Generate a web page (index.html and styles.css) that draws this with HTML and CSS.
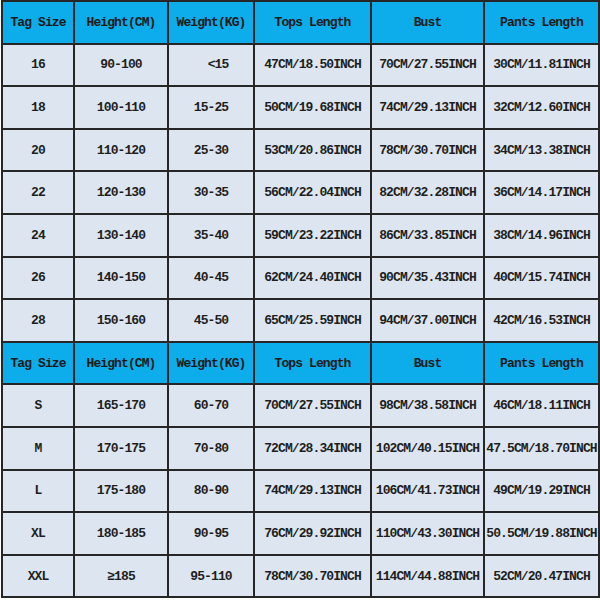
FILE: index.html
```html
<!DOCTYPE html>
<html>
<head>
<meta charset="utf-8">
<link rel="stylesheet" href="styles.css">
</head>
<body>
<table class="chart">
  <colgroup>
    <col class="c1"><col class="c2"><col class="c3"><col class="c4"><col class="c5"><col class="c6">
  </colgroup>
  <tr class="head"><td>Tag Size</td><td>Height(CM)</td><td>Weight(KG)</td><td>Tops Length</td><td>Bust</td><td>Pants Length</td></tr>
  <tr><td>16</td><td>90-100</td><td class="lt">&lt;15</td><td>47CM/18.50INCH</td><td>70CM/27.55INCH</td><td>30CM/11.81INCH</td></tr>
  <tr><td>18</td><td>100-110</td><td>15-25</td><td>50CM/19.68INCH</td><td>74CM/29.13INCH</td><td>32CM/12.60INCH</td></tr>
  <tr><td>20</td><td>110-120</td><td>25-30</td><td>53CM/20.86INCH</td><td>78CM/30.70INCH</td><td>34CM/13.38INCH</td></tr>
  <tr><td>22</td><td>120-130</td><td>30-35</td><td>56CM/22.04INCH</td><td>82CM/32.28INCH</td><td>36CM/14.17INCH</td></tr>
  <tr><td>24</td><td>130-140</td><td>35-40</td><td>59CM/23.22INCH</td><td>86CM/33.85INCH</td><td>38CM/14.96INCH</td></tr>
  <tr><td>26</td><td>140-150</td><td>40-45</td><td>62CM/24.40INCH</td><td>90CM/35.43INCH</td><td>40CM/15.74INCH</td></tr>
  <tr><td>28</td><td>150-160</td><td>45-50</td><td>65CM/25.59INCH</td><td>94CM/37.00INCH</td><td>42CM/16.53INCH</td></tr>
  <tr class="head"><td>Tag Size</td><td>Height(CM)</td><td>Weight(KG)</td><td>Tops Length</td><td>Bust</td><td>Pants Length</td></tr>
  <tr><td>S</td><td>165-170</td><td>60-70</td><td>70CM/27.55INCH</td><td>98CM/38.58INCH</td><td>46CM/18.11INCH</td></tr>
  <tr><td>M</td><td>170-175</td><td>70-80</td><td>72CM/28.34INCH</td><td>102CM/40.15INCH</td><td>47.5CM/18.70INCH</td></tr>
  <tr><td>L</td><td>175-180</td><td>80-90</td><td>74CM/29.13INCH</td><td>106CM/41.73INCH</td><td>49CM/19.29INCH</td></tr>
  <tr><td>XL</td><td>180-185</td><td>90-95</td><td>76CM/29.92INCH</td><td>110CM/43.30INCH</td><td>50.5CM/19.88INCH</td></tr>
  <tr><td>XXL</td><td>≥185</td><td>95-110</td><td>78CM/30.70INCH</td><td>114CM/44.88INCH</td><td>52CM/20.47INCH</td></tr>
</table>
</body>
</html>
```
FILE: styles.css
```css
html, body {
  margin: 0;
  padding: 0;
  background: #ffffff;
}
.chart {
  border-collapse: collapse;
  table-layout: fixed;
  width: 597px;
  margin: 0 0 0 1px;
  font-family: "Liberation Mono", "Courier New", monospace;
  font-weight: bold;
  font-size: 13px;
  letter-spacing: -0.9px;
  color: #1e1e1e;
}
.c1 { width: 72px; }
.c2 { width: 94px; }
.c3 { width: 86px; }
.c4 { width: 117px; }
.c5 { width: 113px; }
.c6 { width: 115px; }
.chart td {
  border: 2px solid #262626;
  background: #dde6f0;
  text-align: center;
  vertical-align: middle;
  height: 40.6px;
  padding: 0;
  white-space: nowrap;
}
.chart .head td {
  background: #0cadea;
  color: #1a1a1a;
}
.chart td.lt {
  padding-left: 14px;
}
```
